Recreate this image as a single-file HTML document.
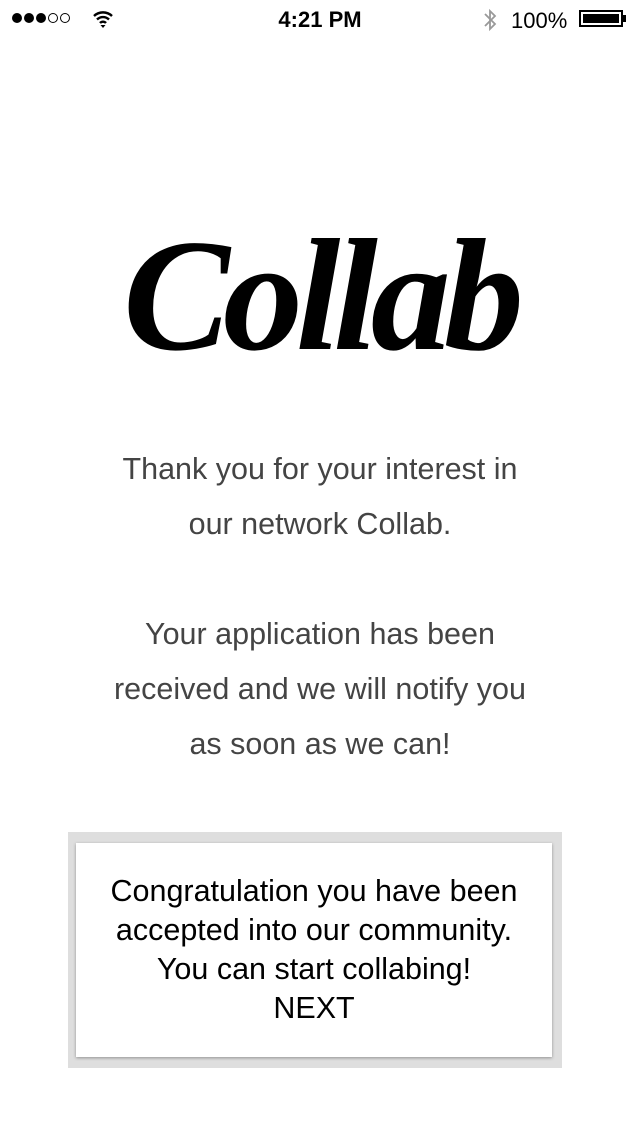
<!DOCTYPE html>
<html><head><meta charset="utf-8"><style>
body{margin:0;width:640px;height:1136px;background:#fff;font-family:"Liberation Sans",sans-serif;position:relative;overflow:hidden}
.sb{position:absolute;top:0;left:0;width:640px;height:40px;font-size:22px}
.logo{position:absolute;left:0;width:640px;top:205px;text-align:center;font-family:"Liberation Serif",serif;font-style:italic;font-weight:bold;font-size:160px;letter-spacing:-7px;line-height:180px;color:#000}
.msg{position:absolute;top:442px;left:0;width:640px;text-align:center;font-size:30.5px;line-height:55px;color:#444}
.outer{position:absolute;left:68px;top:832px;width:494px;height:236px;background:#dedede}
.inner{position:absolute;left:8px;top:11px;width:476px;height:214px;background:#fff;box-shadow:0 1px 3px rgba(0,0,0,.35);text-align:center;font-size:30.5px;line-height:39px;color:#000;padding-top:29px;box-sizing:border-box}
</style></head><body>
<div class="sb">
<div style="position:absolute;left:12px;top:13px;display:flex;gap:2px">
<span style="width:10px;height:10px;border-radius:50%;background:#000"></span>
<span style="width:10px;height:10px;border-radius:50%;background:#000"></span>
<span style="width:10px;height:10px;border-radius:50%;background:#000"></span>
<span style="width:8px;height:8px;border-radius:50%;border:1px solid #000"></span>
<span style="width:8px;height:8px;border-radius:50%;border:1px solid #000"></span>
</div>
<svg style="position:absolute;left:92px;top:9px" width="22" height="20" viewBox="0 0 22 20"><path d="M2 7a13 13 0 0 1 18 0M5 10.5a8.5 8.5 0 0 1 12 0M8 14a4 4 0 0 1 6 0" stroke="#000" stroke-width="2.4" fill="none"/><path d="M8.5 16l2.5 3 2.5-3z" fill="#000"/></svg>
<div style="position:absolute;left:0;width:640px;top:7px;text-align:center;font-weight:bold;font-size:22px">4:21 PM</div>
<svg style="position:absolute;left:483px;top:8px" width="14" height="24" viewBox="0 0 14 24"><path d="M2 6l10 10-5 5V3l5 5L2 18" stroke="#999" stroke-width="1.8" fill="none"/></svg>
<div style="position:absolute;left:511px;top:8px;font-size:22px">100%</div>
<div style="position:absolute;left:579px;top:10px;width:44px;height:17px;border:2px solid #000;box-sizing:border-box;padding:2px"><div style="background:#000;width:100%;height:100%"></div></div>
<div style="position:absolute;left:623px;top:15px;width:3px;height:7px;background:#000"></div>
</div>
<div class="logo">Collab</div>
<div class="msg">Thank you for your interest in<br>our network Collab.<br><br>Your application has been<br>received and we will notify you<br>as soon as we can!</div>
<div class="outer"><div class="inner">Congratulation you have been<br>accepted into our community.<br>You can start collabing!<br>NEXT</div></div>
</body></html>
